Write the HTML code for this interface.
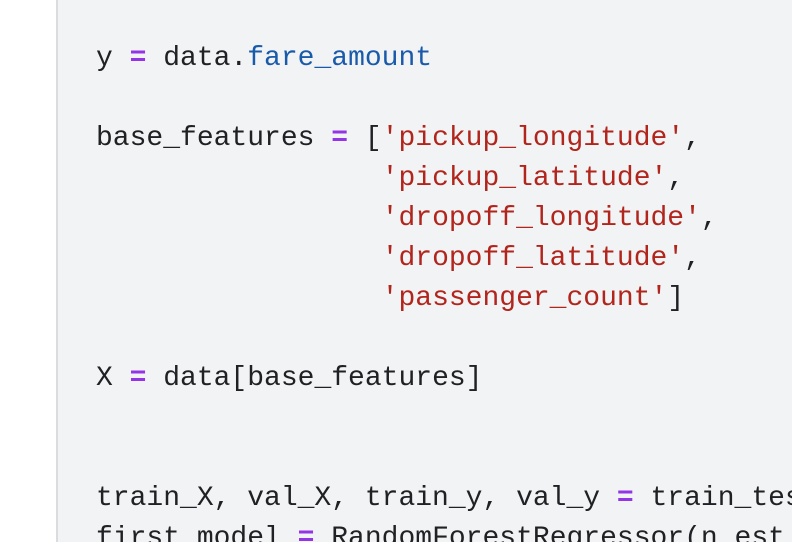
<!DOCTYPE html>
<html><head><style>
html,body{margin:0;padding:0;width:792px;height:542px;overflow:hidden;background:#fff}
.cell{position:absolute;left:56px;top:0;width:736px;height:542px;background:#f1f3f4;border-left:2px solid #dadce0;overflow:hidden}
pre{position:absolute;left:38px;top:39px;margin:0;font-family:"Liberation Mono",monospace;font-size:28px;line-height:40px;color:#202124;white-space:pre}
.o{color:#9334e6;font-weight:bold}.b{color:#1a5aaa}.s{color:#b1251d}
</style></head><body>
<div class="cell">
<pre>y <span class="o">=</span> data.<span class="b">fare_amount</span>

base_features <span class="o">=</span> [<span class="s">'pickup_longitude'</span>,
                 <span class="s">'pickup_latitude'</span>,
                 <span class="s">'dropoff_longitude'</span>,
                 <span class="s">'dropoff_latitude'</span>,
                 <span class="s">'passenger_count'</span>]

X <span class="o">=</span> data[base_features]


train_X, val_X, train_y, val_y <span class="o">=</span> train_tes
first_model <span class="o">=</span> RandomForestRegressor(n_est</pre>
</div>
</body></html>
